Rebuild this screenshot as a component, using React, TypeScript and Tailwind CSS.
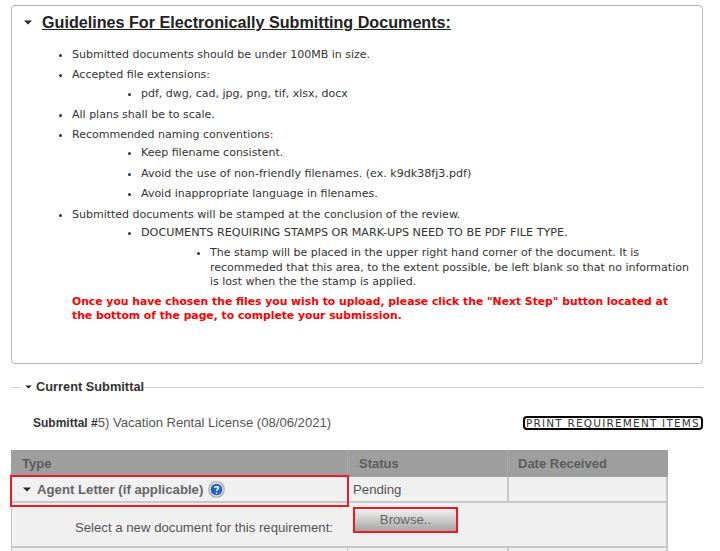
const Caret = ({ className }: { className: string }) => (
  <svg viewBox="0 0 8 5" className={className}>
    <path d="M0 0.5 H8 L4 4.5 Z" fill="#222" />
  </svg>
);

const HelpIcon = () => (
  <svg viewBox="0 0 18 18" className="h-[17px] w-[17px]">
    <circle cx="9" cy="9" r="8.2" fill="#e8e8e8" stroke="#a5a5a5" strokeWidth="1.2" />
    <circle cx="9" cy="9" r="6.2" fill="#2461c8" />
    <path
      d="M6.8 7.2 C6.9 5.7 11.2 5.4 11.2 7.5 C11.2 9 9 8.9 9 10.6"
      fill="none"
      stroke="#fff"
      strokeWidth="1.6"
    />
    <circle cx="9" cy="12.7" r="0.9" fill="#fff" />
  </svg>
);

export default function App() {
  return (
    <div className="w-[720px] h-[551px] overflow-hidden bg-white pt-[5px] pl-[11px] font-['Liberation_Sans',sans-serif]">
      {/* Guidelines */}
      <div className="w-[692px] h-[359px] rounded-[4px] border border-[#b5b5b5] pt-[6px] font-['DejaVu_Sans',sans-serif] text-[11px] leading-[14px] text-[#333]">
        <div className="flex items-center pl-[12px]">
          <Caret className="w-[8px] h-[5px] mr-[10px]" />
          <span className="font-['Liberation_Sans',sans-serif] font-bold text-[16.15px] leading-[20px] underline text-[#222]">
            Guidelines For Electronically Submitting Documents:
          </span>
        </div>
        <ul className="list-disc pl-[60px] pr-[10px] mt-[16px]">
          <li className="pb-[6px]">Submitted documents should be under 100MB in size.</li>
          <li>
            Accepted file extensions:
            <ul className="list-disc pl-[69px] mt-[5px]">
              <li className="pb-[7px]">pdf, dwg, cad, jpg, png, tif, xlsx, docx</li>
            </ul>
          </li>
          <li className="pb-[6px]">All plans shall be to scale.</li>
          <li>
            Recommended naming conventions:
            <ul className="list-disc pl-[69px] mt-[4px]">
              <li className="pb-[7px]">Keep filename consistent.</li>
              <li className="pb-[6px] text-[11.1px]">Avoid the use of non-friendly filenames. (ex. k9dk38fj3.pdf)</li>
              <li className="pb-[7px]">Avoid inappropriate language in filenames.</li>
            </ul>
          </li>
          <li>
            Submitted documents will be stamped at the conclusion of the review.
            <ul className="list-disc pl-[69px] mt-[4px]">
              <li className="text-[11.2px]">
                DOCUMENTS REQUIRING STAMPS OR MARK-UPS NEED TO BE PDF FILE TYPE.
                <ul className="list-disc pl-[69px] mt-[6px]">
                  <li className="leading-[14.5px] text-[11px]">
                    The stamp will be placed in the upper right hand corner of the document. It is recommeded that this area, to the extent possible, be left blank so that no information is lost when the the stamp is applied.
                  </li>
                </ul>
              </li>
            </ul>
          </li>
        </ul>
        <p className="pl-[60px] pr-[30px] mt-[5px] font-bold text-[10.8px] text-[#f00]">
          Once you have chosen the files you wish to upload, please click the "Next Step" button located at the bottom of the page, to complete your submission.
        </p>
      </div>

      {/* Current Submittal */}
      <div className="w-[692px] mt-[15px] flex items-center h-[16px]">
        <div className="w-[10px] h-[1px] bg-[#d0d0d0]" />
        <div className="flex items-center pl-[4px]">
          <Caret className="w-[7px] h-[4px] mr-[4px]" />
          <span className="font-bold text-[12.8px] leading-[14px] text-[#333]">Current Submittal</span>
        </div>
        <div className="flex-1 h-[1px] bg-[#d0d0d0]" />
      </div>

      <div className="w-[692px] mt-[20px] pl-[22px] flex items-center justify-between h-[16px]">
        <span className="text-[13.1px] text-[#555]">
          <span className="font-bold text-[#333] text-[12px]">Submittal #</span>5) Vacation Rental License (08/06/2021)
        </span>
        <span className="rounded-[4px] border-2 border-black px-[1px] font-['DejaVu_Sans',sans-serif] text-[10.5px] leading-[10px] tracking-[1.2px] text-[#333]">
          PRINT REQUIREMENT ITEMS
        </span>
      </div>

      {/* Requirements table */}
      <div className="w-[657px] mt-[19px] text-[13.2px] text-[#555]">
        <div className="grid grid-cols-[336px_160px_161px] h-[27px] bg-[#9e9e9e] font-bold text-[13px] text-[#5c5c5c]">
          <div className="pl-[11px] leading-[27px]">Type</div>
          <div className="pl-[11px] leading-[27px] border-l border-[#aaa]">Status</div>
          <div className="pl-[10px] leading-[27px] border-l border-[#aaa]">Date Received</div>
        </div>
        <div className="grid grid-cols-[336px_160px_161px] h-[26px] bg-[#f0f0f0] border-b-2 border-[#c8c8c8] border-r-2">
          <div className="relative flex items-center pl-[11px] border-l border-[#c8c8c8]">
            <Caret className="w-[8px] h-[5px] mr-[6px]" />
            <span className="font-bold text-[#666] mr-[5px]">Agent Letter (if applicable)</span>
            <HelpIcon />
            <div className="absolute left-[-2px] top-[-2px] w-[339px] h-[32px] border-2 border-[#ed1c24]" />
          </div>
          <div className="pl-[6px] leading-[25px]">Pending</div>
          <div className="border-l-2 border-[#c8c8c8]" />
        </div>
        <div className="grid grid-cols-[336px_1fr] h-[45px] bg-[#f0f0f0] border-b-2 border-[#c8c8c8] border-r-2 border-l">
          <div className="text-right pt-[15px] pr-[15px]">Select a new document for this requirement:</div>
          <div className="pl-[5px] pt-[4px]">
            <button className="w-[105px] h-[26px] border-2 border-[#ed1c24] bg-gradient-to-b from-[#f2f2f2] to-[#a5a5a5] text-[#666]">
              Browse..
            </button>
          </div>
        </div>
        <div className="grid grid-cols-[336px_160px_161px] h-[20px] bg-[#f0f0f0] border-r-2 border-[#c8c8c8]">
          <div className="border-l border-[#c8c8c8]" />
          <div className="border-l border-[#c8c8c8]" />
          <div className="border-l-2 border-[#c8c8c8]" />
        </div>
      </div>
    </div>
  );
}
